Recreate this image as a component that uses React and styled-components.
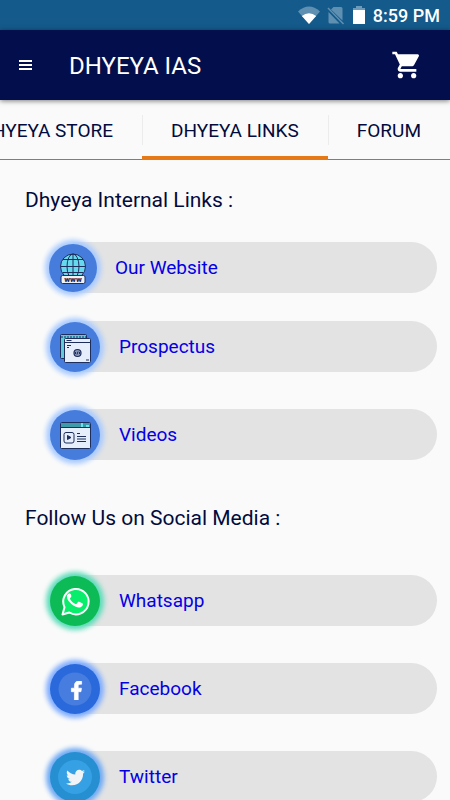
/*--------------------------
    Import
--------------------------*/
import React, { useState } from 'react';
import styled, { createGlobalStyle } from 'styled-components';
import { MdShoppingCart } from 'react-icons/md';
import { FaFacebookF, FaTwitter } from 'react-icons/fa';

/*--------------------------
    Variable
--------------------------*/
const Colors = {
    Status: '#145a8a',
    Main: '#020f4c',
    Accent: '#e57817',
    AccentLine: '#e2600f',
    Back: '#fafafa',
    Bar: '#e3e3e3',
    Text: '#020b3c',
    Link: '#0400e6',
    Ink: '#1d2d5c',
};

const TABS = ['DHYEYA STORE', 'DHYEYA LINKS', 'FORUM'];

/*--------------------------
    Styled
--------------------------*/
const PageStyle = createGlobalStyle`
    * {
        box-sizing: border-box;
    }
    body {
        margin: 0;
        background-color: ${Colors.Back};
        font-family: Roboto, "Liberation Sans", sans-serif;
    }
`;
const Screen = styled.div`
    display: flex;
    flex-direction: column;
    height: 100vh;
    overflow: hidden;
`;
const StatusBar = styled.div`
    display: flex;
    flex: none;
    height: 30px;
    padding: 2px 10px 0 0;
    background-color: ${Colors.Status};
    color: #fff;
    align-items: center;
    justify-content: flex-end;
`;
const StatusIcon = styled.svg`
    display: block;
    width: ${props => props.$width}px;
    height: 20px;
    margin: 0 7px 0 0;
`;
const Clock = styled.time`
    font-size: 18px;
    font-weight: 500;
    line-height: 24px;
`;
const Topbar = styled.header`
    display: flex;
    position: relative;
    flex: none;
    height: 70px;
    padding: 0 27px 0 12px;
    background-color: ${Colors.Main};
    box-shadow: 0 1px 5px rgba(0,0,0,0.5);
    color: #fff;
    align-items: center;
`;
const IconButton = styled.button`
    display: flex;
    height: 48px;
    padding: 0;
    border: 0;
    background: none;
    color: inherit;
    cursor: pointer;
    align-items: center;
    justify-content: center;
`;
const MenuButton = styled(IconButton)`
    width: 27px;
`;
const TopbarTitle = styled.h1`
    flex: 1;
    margin: 0 0 0 30px;
    padding: 2px 0 0;
    font-size: 24px;
    font-weight: 400;
    line-height: 32px;
`;
const TabStrip = styled.div`
    display: flex;
    flex: none;
    height: 60px;
    overflow: hidden;
    background:
        linear-gradient(${Colors.AccentLine}, ${Colors.AccentLine})
        left bottom / 100% 1px no-repeat;
    justify-content: flex-end;
`;
const Tab = styled.button`
    display: flex;
    flex: none;
    padding: 5px 29px 0;
    border: 0;
    border-bottom: 4px solid ${props => props['aria-selected'] ? Colors.Accent : 'transparent'};
    background: linear-gradient(#ececec, #ececec) left 15px / 1px 30px no-repeat;
    color: ${Colors.Text};
    font: inherit;
    font-size: 19px;
    line-height: 24px;
    white-space: nowrap;
    cursor: pointer;
    align-items: center;
`;
const Content = styled.main`
    flex: 1;
    min-height: 0;
    padding: 28px 13px 0 25px;
    overflow-y: auto;
    scrollbar-width: none;
`;
const Heading = styled.h2`
    margin: 0;
    color: ${Colors.Text};
    font-size: 21px;
    font-weight: 400;
    line-height: 24px;
`;
const LinkList = styled.ul`
    display: flex;
    flex-direction: column;
    gap: 37px;
    margin: ${props => props.$top}px 0 46px;
    padding: 0;
    list-style: none;
`;
const LinkItem = styled.li`
    margin: 0 0 ${props => props.$small ? -9 : 0}px;
`;
const LinkBar = styled.a`
    display: flex;
    height: 51px;
    margin: 0 0 0 ${props => props.$small ? 48 : 50}px;
    border-radius: 0 26px 26px 0;
    background-color: ${Colors.Bar};
    color: ${Colors.Link};
    font-size: 19px;
    line-height: 24px;
    text-decoration: none;
    align-items: center;
    gap: ${props => props.$small ? 18 : 19}px;
`;
const Badge = styled.span`
    display: block;
    width: ${props => props.$small ? 48 : 50}px;
    height: ${props => props.$small ? 48 : 50}px;
    margin-left: ${props => props.$small ? -24 : -25}px;
    border-radius: 50%;
    background-color: ${props => props.$color};
    box-shadow: 0 0 5px 4px ${props => props.$glow};
    color: #fff;
`;
const BadgeArt = styled.svg`
    display: block;
    width: 100%;
    height: 100%;
`;

/*--------------------------
    Icons
--------------------------*/
const WebsiteArt = () => (
    <BadgeArt viewBox="0 0 48 48" fill="none" stroke={Colors.Ink} aria-hidden="true">
        <circle cx="24" cy="22.500" r="12.500" fill="#66d9ef" />
        <ellipse cx="24" cy="22.500" rx="6" ry="12.500" />
        <path d="M24 10v24M11.500 22.500h25M14 15.500h20M14 28.500h20" />
        <rect x="12" y="31.500" width="24" height="8" rx="1.500" fill="#eef3fb" />
        <text
            x="24" y="38" fill={Colors.Ink} stroke="none"
            fontSize="8" fontWeight="900" textAnchor="middle"
        >
            www
        </text>
    </BadgeArt>
);

const ProspectusArt = () => (
    <BadgeArt viewBox="0 0 50 50" fill="none" stroke={Colors.Ink} aria-hidden="true">
        <rect x="10.500" y="12.500" width="26" height="24" rx="1" fill="#5fcbd8" />
        <path d="M11 15h25" strokeDasharray="2 1" />
        <rect x="14.500" y="16.500" width="26" height="24" rx="1" fill="#e6edfb" />
        <path d="M15 20.500h25M16.500 18.500h5" />
        <path d="M17 23.500h4M17 25.500h2" />
        <circle cx="27.500" cy="31" r="3.500" fill="#8998b8" strokeWidth="1.200" />
        <path d="M25 31l1-1M25 31l1 1M30 31l-1-1M30 31l-1 1M28 29.500l-1 3M36 38h3" />
    </BadgeArt>
);

const VideosArt = () => (
    <BadgeArt viewBox="0 0 50 50" fill="none" stroke={Colors.Ink} aria-hidden="true">
        <rect x="10.500" y="12.500" width="30" height="26" rx="1" fill="#e6edfb" />
        <path d="M11 13h29v4H11z" fill="#3d9baa" stroke="none" />
        <path d="M31 13h2v4h-2zM36 15h3v2h-3z" fill="#64e5ef" stroke="none" />
        <path d="M11 17.500h29" />
        <rect x="14" y="22.500" width="10" height="10.500" rx="2" />
        <path d="M17.500 25.500v4l3.500-2z" fill={Colors.Ink} />
        <path d="M27 23.500h3M27 26.500h9M27 29h9M27 31.500h9" />
    </BadgeArt>
);

const WhatsappArt = () => (
    <BadgeArt viewBox="0 0 50 50" fill="none" aria-hidden="true">
        <path
            d="M12.500 38.500l2-7.300A12.700 12.700 0 1 1 19.300 36.500z"
            fill="#08ee6c" stroke="#fff" strokeWidth="2" strokeLinejoin="round"
        />
        <path
            d="M21 18.500c-.5-1.100-1-1.100-1.600-1.100-1.300.1-2.500 1.500-2.500 3.400 0 2 1.500 4 2.600 5.300 2.300 2.700 5.200 5 8.800 5.500 2 .2 4.100-1.100 4.500-2.600.2-.8.2-1.300-.1-1.500l-3.500-1.700c-.6-.3-.9-.1-1.200.3l-1.300 1.600c-.4.4-.8.4-1.300.2-2.400-1-4.200-2.500-5.400-4.800-.2-.5 0-.8.3-1.100l.9-1.200c.3-.4.200-.8 0-1.200z"
            fill="#fff"
        />
    </BadgeArt>
);

const FacebookArt = () => (
    <BadgeArt viewBox="0 0 50 50" aria-hidden="true">
        <circle cx="25" cy="25" r="16.500" fill="#487de0" />
        <FaFacebookF x="17" y="17" width="17" height="17" stroke="#fff" strokeWidth="20" />
    </BadgeArt>
);

const TwitterArt = () => (
    <BadgeArt viewBox="0 0 50 50" aria-hidden="true">
        <circle cx="25" cy="25" r="17" fill="#36a0e5" />
        <FaTwitter x="16" y="16" width="20" height="20" color="#f1f4f6" />
    </BadgeArt>
);

const INTERNAL_LINKS = [
    { text: 'Our Website', Art: WebsiteArt, color: '#467ddd', glow: '#a8caff', small: true },
    { text: 'Prospectus', Art: ProspectusArt, color: '#467ddd', glow: '#a8caff' },
    { text: 'Videos', Art: VideosArt, color: '#467ddd', glow: '#a8caff' },
];

const SOCIAL_LINKS = [
    { text: 'Whatsapp', Art: WhatsappArt, color: '#0dbb56', glow: '#5cdcba' },
    { text: 'Facebook', Art: FacebookArt, color: '#2969db', glow: '#7dabff' },
    { text: 'Twitter', Art: TwitterArt, color: '#258fd1', glow: '#6ba8f4' },
];

/*--------------------------
    Components
--------------------------*/
const PhoneStatus = () => (
    <StatusBar>
        <StatusIcon $width={22} viewBox="0 0 22 20" aria-hidden="true">
            <path d="M0 5.500Q11-4.500 22 5.500L11 18z" fill="#5f90b2" />
            <path d="M3.800 10Q11 4.500 18.200 10L11 18z" fill="#fff" />
        </StatusIcon>
        <StatusIcon $width={18} viewBox="0 0 18 20" aria-hidden="true">
            <path d="M6.500 1H14q1.500 0 1.500 1.500V14.500L4 3.500zM1.500 6l11 11.500H3Q1.500 17.500 1.500 16z" fill="#5f90b2" />
            <path d="M1 2l15.500 16" stroke="#5f90b2" strokeWidth="1.500" />
        </StatusIcon>
        <StatusIcon $width={14} viewBox="0 0 14 20" aria-hidden="true">
            <path d="M4 0h6v2h3v2H1V2h3z" fill="#6c9aba" />
            <path d="M1 4h12v14H1z" fill="#fff" />
        </StatusIcon>
        <Clock>8:59 PM</Clock>
    </StatusBar>
);

const LinkSection = ({ title, links, top }) => (
    <section>
        <Heading>{title}</Heading>
        <LinkList $top={top}>
            {links.map(({ text, Art, color, glow, small }) => (
                <LinkItem key={text} $small={small}>
                    <LinkBar href="#" $small={small}>
                        <Badge $small={small} $color={color} $glow={glow}>
                            <Art />
                        </Badge>
                        {text}
                    </LinkBar>
                </LinkItem>
            ))}
        </LinkList>
    </section>
);

/*--------------------------
    Main Component
--------------------------*/
const App = () => {

    const [activeTab, setActiveTab] = useState('DHYEYA LINKS');

    return (
        <Screen>
            <PageStyle />
            <PhoneStatus />
            <Topbar>
                <MenuButton type="button" aria-label="Menu">
                    <svg width="13" height="10" viewBox="0 0 13 10" aria-hidden="true">
                        <path d="M0 0h13v2H0zM0 4h13v2H0zM0 8h13v2H0z" fill="#fff" />
                    </svg>
                </MenuButton>
                <TopbarTitle>DHYEYA IAS</TopbarTitle>
                <IconButton type="button" aria-label="Cart">
                    <MdShoppingCart size={32} />
                </IconButton>
            </Topbar>
            <TabStrip role="tablist">
                {TABS.map(name => (
                    <Tab
                        key={name}
                        type="button"
                        role="tab"
                        aria-selected={name === activeTab}
                        onClick={() => setActiveTab(name)}
                    >
                        {name}
                    </Tab>
                ))}
            </TabStrip>
            <Content>
                <LinkSection title="Dhyeya Internal Links :" links={INTERNAL_LINKS} top={30} />
                <LinkSection title="Follow Us on Social Media :" links={SOCIAL_LINKS} top={45} />
            </Content>
        </Screen>
    );
};

/*--------------------------
    Export
--------------------------*/
export default App;
